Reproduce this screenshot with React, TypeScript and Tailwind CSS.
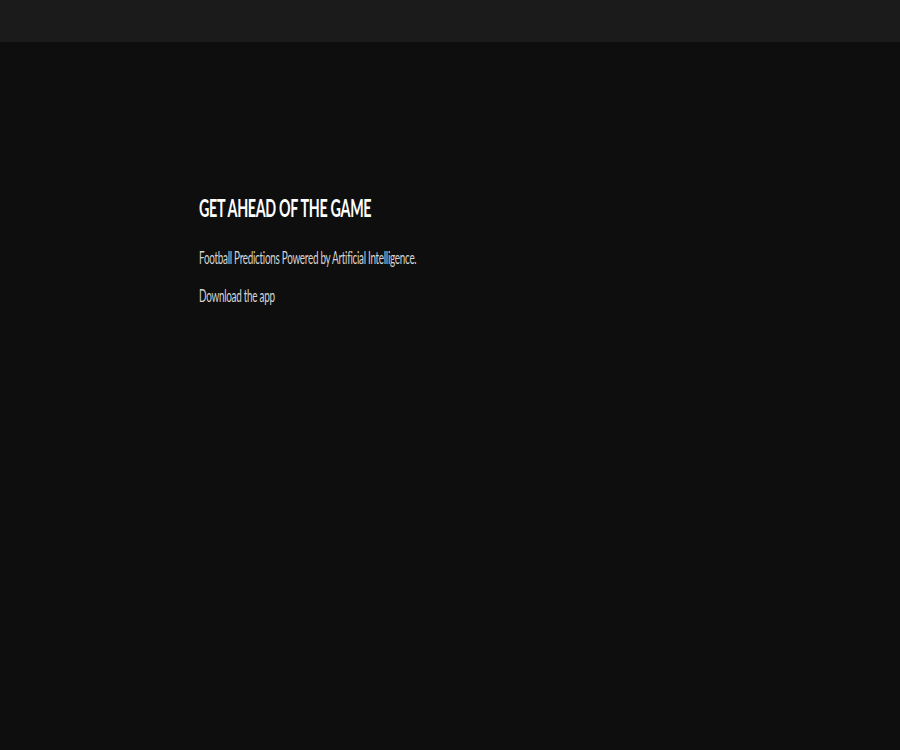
export default function App() {
  return (
    <div className="h-[750px] overflow-y-scroll bg-[#0e0e0e] font-['Lato',sans-serif] [&::-webkit-scrollbar]:w-[7px] [&::-webkit-scrollbar-track]:bg-white [&::-webkit-scrollbar-thumb]:rounded-full [&::-webkit-scrollbar-thumb]:border-[2px] [&::-webkit-scrollbar-thumb]:border-solid [&::-webkit-scrollbar-thumb]:border-white [&::-webkit-scrollbar-thumb]:bg-[#8a8a8a]">
      <div className="min-h-[3800px]">
        <header className="h-[42px] bg-[#1b1b1b]" />
        <main className="pl-[199px] pt-[150px]">
          <h1 className="origin-left scale-x-[0.595] whitespace-nowrap text-[24px] font-bold leading-[32px] tracking-[-0.5px] text-white">
            GET AHEAD OF THE GAME
          </h1>
          <p className="mt-[22px] origin-left scale-x-[0.55] whitespace-nowrap text-[18px] leading-[22px] tracking-[-0.5px] text-[#d4d4d4]">
            Football Predictions Powered by Artificial Intelligence.
          </p>
          <p className="mt-[16px] origin-left scale-x-[0.55] whitespace-nowrap text-[18px] leading-[22px] tracking-[-0.5px] text-[#d4d4d4]">
            Download the app
          </p>
        </main>
      </div>
    </div>
  );
}
